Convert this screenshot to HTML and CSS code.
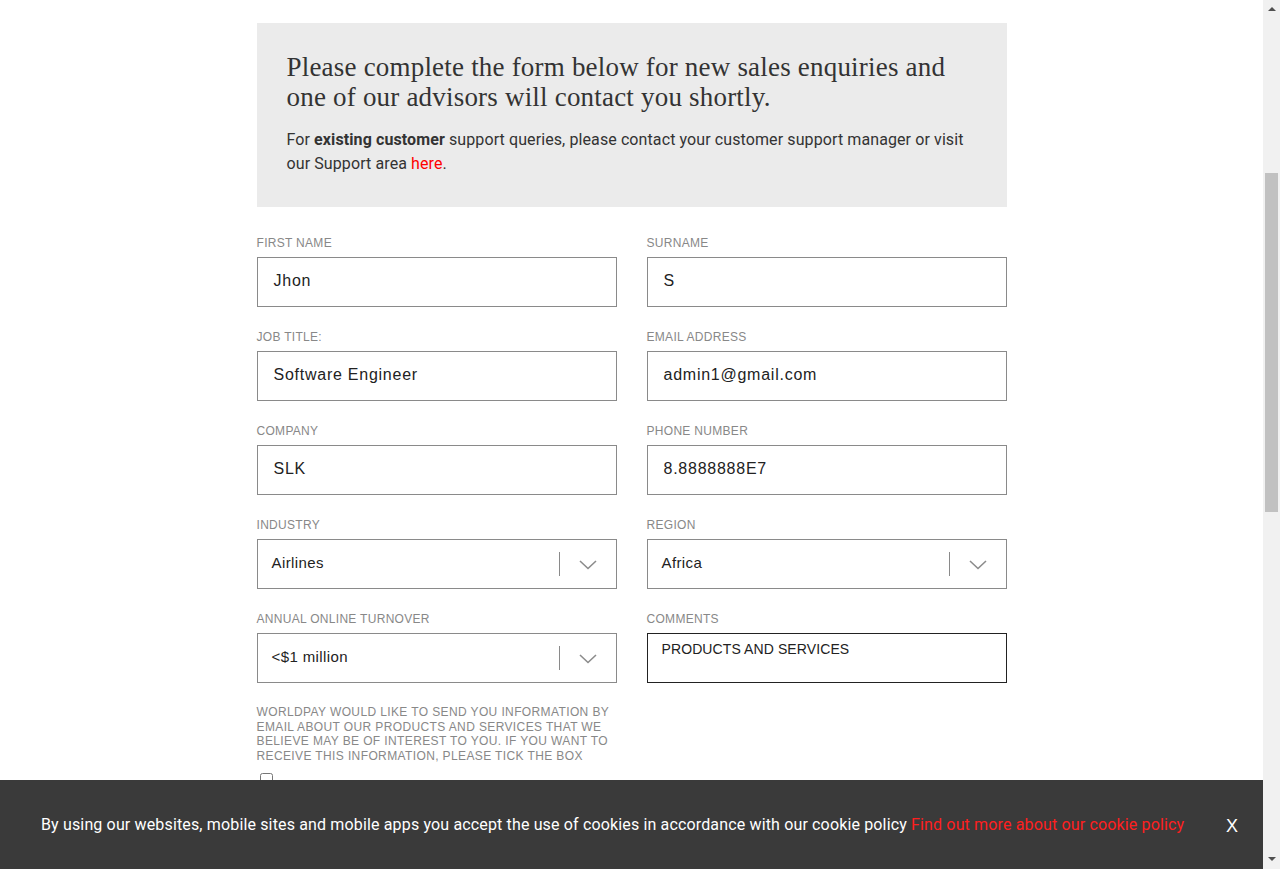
FILE: index.html
```html
<!DOCTYPE html>
<html lang="en">
<head>
<meta charset="utf-8">
<title>Contact sales</title>
<link rel="stylesheet" href="styles.css">
</head>
<body>
<div class="top-space"></div>
<main class="wrap">
  <section class="intro">
    <h1 class="intro-title">Please complete the form below for new sales enquiries and one of our advisors will contact you shortly.</h1>
    <p class="intro-text">For <strong>existing customer</strong> support queries, please contact your customer support manager or visit our Support area <a class="red-link" href="#">here</a>.</p>
  </section>
  <form class="form">
    <div class="field">
      <label class="label">FIRST NAME</label>
      <div class="input">Jhon</div>
    </div>
    <div class="field">
      <label class="label">SURNAME</label>
      <div class="input">S</div>
    </div>
    <div class="field">
      <label class="label">JOB TITLE:</label>
      <div class="input">Software Engineer</div>
    </div>
    <div class="field">
      <label class="label">EMAIL ADDRESS</label>
      <div class="input">admin1@gmail.com</div>
    </div>
    <div class="field">
      <label class="label">COMPANY</label>
      <div class="input">SLK</div>
    </div>
    <div class="field">
      <label class="label">PHONE NUMBER</label>
      <div class="input">8.8888888E7</div>
    </div>
    <div class="field">
      <label class="label">INDUSTRY</label>
      <div class="select"><span class="select-value">Airlines</span><span class="select-sep"></span><svg class="chev" width="18" height="10" viewBox="0 0 18 10"><path d="M1 1 L9 8.5 L17 1" fill="none" stroke="#8c8c8c" stroke-width="1.6"/></svg></div>
    </div>
    <div class="field">
      <label class="label">REGION</label>
      <div class="select"><span class="select-value">Africa</span><span class="select-sep"></span><svg class="chev" width="18" height="10" viewBox="0 0 18 10"><path d="M1 1 L9 8.5 L17 1" fill="none" stroke="#8c8c8c" stroke-width="1.6"/></svg></div>
    </div>
    <div class="field">
      <label class="label">ANNUAL ONLINE TURNOVER</label>
      <div class="select"><span class="select-value">&lt;$1 million</span><span class="select-sep"></span><svg class="chev" width="18" height="10" viewBox="0 0 18 10"><path d="M1 1 L9 8.5 L17 1" fill="none" stroke="#8c8c8c" stroke-width="1.6"/></svg></div>
    </div>
    <div class="field">
      <label class="label">COMMENTS</label>
      <div class="textarea">PRODUCTS AND SERVICES</div>
    </div>
    <div class="consent">
      <p class="consent-text">WORLDPAY WOULD LIKE TO SEND YOU INFORMATION BY EMAIL ABOUT OUR PRODUCTS AND SERVICES THAT WE BELIEVE MAY BE OF INTEREST TO YOU. IF YOU WANT TO RECEIVE THIS INFORMATION, PLEASE TICK THE BOX</p>
      <input class="checkbox" type="checkbox">
    </div>
    <div class="actions">
      <button class="submit" type="button">SUBMIT</button>
    </div>
  </form>
</main>
<div class="bottom-space"></div>
<div class="cookie">
  <p class="cookie-text">By using our websites, mobile sites and mobile apps you accept the use of cookies in accordance with our cookie policy <a class="cookie-link" href="#">Find out more about our cookie policy</a></p>
  <span class="cookie-close">X</span>
</div>
<div class="scrollbar">
  <span class="sb-arrow sb-up"></span>
  <span class="sb-thumb"></span>
  <span class="sb-arrow sb-down"></span>
</div>
<script src="script.js"></script>
</body>
</html>
```
FILE: styles.css
```css
html { scroll-behavior: auto; }
body {
  margin: 0;
  padding-right: 17px;
  background: #fff;
  color: #333;
  font-family: "Liberation Sans", Arial, sans-serif;
}
.top-space { height: 423px; }
.bottom-space { height: 760px; }
.wrap {
  width: 750px;
  margin: 0 auto;
}
.intro {
  background: #ebebeb;
  height: 184px;
  box-sizing: border-box;
  padding: 29px 30px 0 30px;
}
.intro-title {
  margin: 0;
  font-family: "Liberation Serif", "Times New Roman", serif;
  font-weight: normal;
  font-size: 27px;
  line-height: 30px;
  letter-spacing: 0.2px;
  color: #333;
}
.intro-text {
  margin: 16px 0 0 0;
  font-family: Roboto, "Liberation Sans", sans-serif;
  font-size: 16px;
  line-height: 24px;
  letter-spacing: 0.1px;
  color: #333;
}
.intro-text strong { font-weight: 700; }
.red-link { color: #f00; text-decoration: none; }
.form {
  margin-top: 28px;
  display: grid;
  grid-template-columns: 360px 360px;
  column-gap: 30px;
  row-gap: 22px;
}
.field { display: flex; flex-direction: column; }
.label {
  display: block;
  font-size: 12px;
  line-height: 16px;
  letter-spacing: 0.3px;
  color: #888;
  margin-bottom: 6px;
}
.input {
  height: 50px;
  box-sizing: border-box;
  border: 1px solid #8a8a8a;
  padding: 0 16px 2px 16px;
  display: flex;
  align-items: center;
  font-size: 16px;
  letter-spacing: 0.75px;
  color: #222;
}
.select {
  height: 50px;
  box-sizing: border-box;
  border: 1px solid #8a8a8a;
  padding: 0 0 0 14px;
  display: flex;
  align-items: center;
  font-size: 15px;
  letter-spacing: 0.4px;
  color: #222;
}
.select-value { flex: 1; margin-bottom: 4px; }
.select-sep {
  width: 1px;
  height: 24px;
  background: #8a8a8a;
}
.chev { margin: 2px 19px 0 19px; }
.textarea {
  height: 50px;
  box-sizing: border-box;
  border: 1px solid #222;
  padding: 7px 14px 0 14px;
  font-size: 14px;
  line-height: 16px;
  letter-spacing: 0.1px;
  color: #222;
}
.consent { grid-column: 1; }
.consent-text {
  margin: 0;
  font-size: 12px;
  line-height: 14.5px;
  letter-spacing: 0.38px;
  color: #888;
}
.checkbox { margin: 10px 0 0 3px; }
.actions { grid-column: 1 / 3; padding-top: 20px; }
.submit {
  background: #f00;
  color: #fff;
  border: 0;
  height: 50px;
  width: 200px;
  font-size: 16px;
}
.cookie {
  position: fixed;
  left: 0;
  right: 17px;
  bottom: 0;
  height: 89px;
  background: #3a3a3a;
  display: flex;
  align-items: center;
  padding: 0 0 0 41px;
  box-sizing: border-box;
}
.cookie-text {
  margin: 0;
  flex: 1;
  font-family: Roboto, "Liberation Sans", sans-serif;
  font-size: 16px;
  line-height: 20px;
  letter-spacing: 0.15px;
  color: #fff;
}
.cookie-link { color: #ff1f1f; text-decoration: none; }
.cookie-close {
  width: 30px;
  margin-right: 16px;
  margin-top: 4px;
  text-align: center;
  font-size: 18px;
  color: #fff;
}
.scrollbar {
  position: fixed;
  top: 0;
  right: 0;
  width: 17px;
  height: 100%;
  background: #f1f1f1;
}
.sb-thumb {
  position: absolute;
  left: 2px;
  right: 2px;
  top: 173px;
  height: 339px;
  background: #c1c1c1;
}
.sb-arrow {
  position: absolute;
  left: 5px;
  width: 0;
  height: 0;
  border-left: 4px solid transparent;
  border-right: 4px solid transparent;
}
.sb-up {
  top: 7px;
  border-bottom: 4px solid #505050;
}
.sb-down {
  bottom: 8px;
  border-top: 4px solid #505050;
}
```
FILE: script.js
```js
window.scrollTo(0, 400);
window.addEventListener('load', function () { window.scrollTo(0, 400); });
```
